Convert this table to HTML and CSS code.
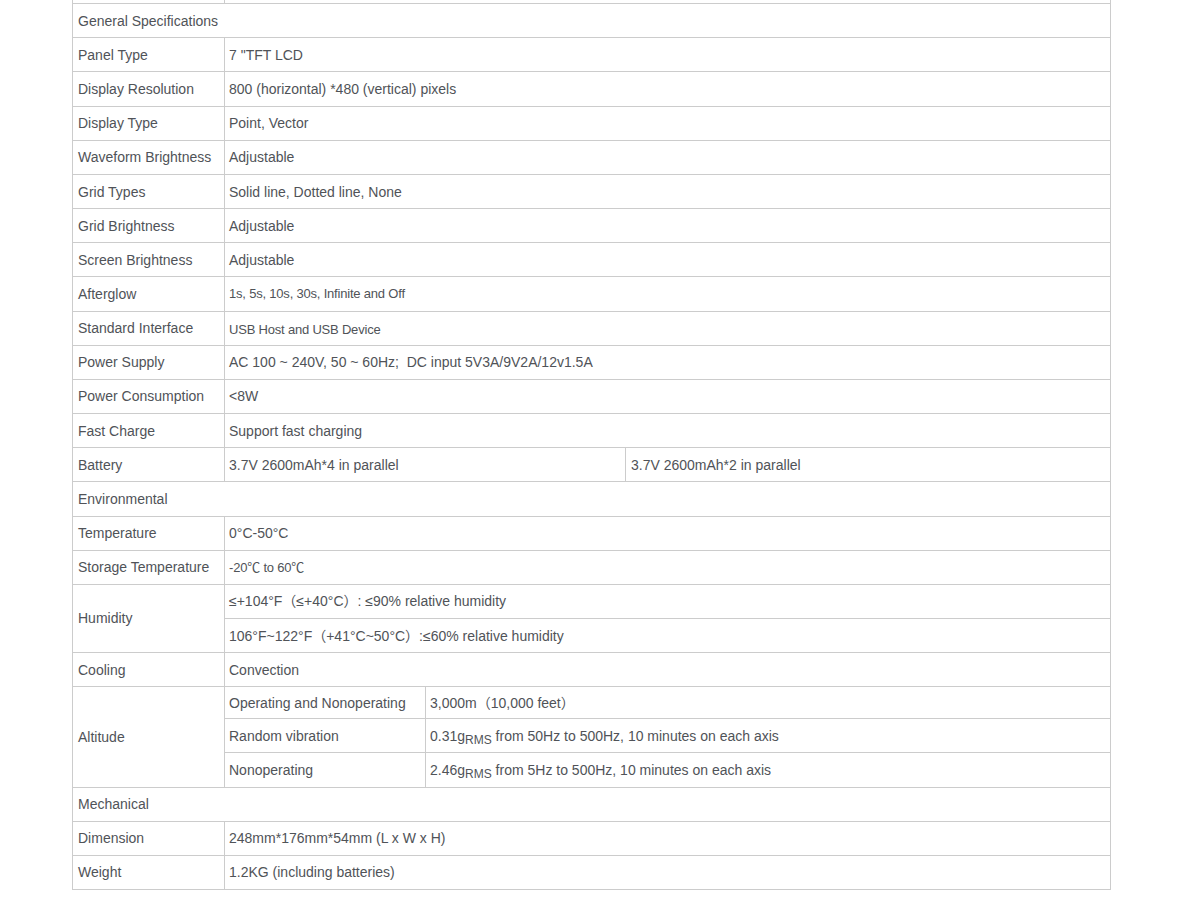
FILE: index.html
```html
<!DOCTYPE html>
<html>
<head>
<meta charset="utf-8">
<link rel="stylesheet" href="styles.css">
</head>
<body>
<table class="spec">
  <colgroup>
    <col class="c1"><col class="c2"><col class="c3"><col class="c4">
  </colgroup>
  <tr class="cut"><td></td><td colspan="3"></td></tr>
  <tr><td colspan="4">General Specifications</td></tr>
  <tr><td>Panel Type</td><td class="v" colspan="3">7 "TFT LCD</td></tr>
  <tr><td>Display Resolution</td><td class="v" colspan="3">800 (horizontal) *480 (vertical) pixels</td></tr>
  <tr><td>Display Type</td><td class="v" colspan="3">Point, Vector</td></tr>
  <tr><td>Waveform Brightness</td><td class="v" colspan="3">Adjustable</td></tr>
  <tr><td>Grid Types</td><td class="v" colspan="3">Solid line, Dotted line, None</td></tr>
  <tr><td>Grid Brightness</td><td class="v" colspan="3">Adjustable</td></tr>
  <tr><td>Screen Brightness</td><td class="v" colspan="3">Adjustable</td></tr>
  <tr><td>Afterglow</td><td class="v" colspan="3"><span class="sm">1s, 5s, 10s, 30s, Infinite and Off</span></td></tr>
  <tr><td>Standard Interface</td><td class="v" colspan="3"><span class="sm low">USB Host and USB Device</span></td></tr>
  <tr><td>Power Supply</td><td class="v" colspan="3">AC 100 ~ 240V, 50 ~ 60Hz;&nbsp; DC input 5V3A/9V2A/12v1.5A</td></tr>
  <tr><td>Power Consumption</td><td class="v" colspan="3">&lt;8W</td></tr>
  <tr><td>Fast Charge</td><td class="v" colspan="3">Support fast charging</td></tr>
  <tr><td>Battery</td><td class="v" colspan="2">3.7V 2600mAh*4 in parallel</td><td>3.7V 2600mAh*2 in parallel</td></tr>
  <tr><td colspan="4">Environmental</td></tr>
  <tr><td>Temperature</td><td class="v" colspan="3">0°C-50°C</td></tr>
  <tr><td>Storage Temperature</td><td class="v" colspan="3"><span class="sm">-20℃ to 60℃</span></td></tr>
  <tr><td rowspan="2">Humidity</td><td class="v" colspan="3">≤+104°F（≤+40°C）: ≤90% relative humidity</td></tr>
  <tr><td class="v" colspan="3">106°F~122°F（+41°C~50°C）:≤60% relative humidity</td></tr>
  <tr><td>Cooling</td><td class="v" colspan="3">Convection</td></tr>
  <tr class="short"><td rowspan="3">Altitude</td><td class="v">Operating and Nonoperating</td><td class="v" colspan="2">3,000m（10,000 feet）</td></tr>
  <tr><td class="v">Random vibration</td><td class="v" colspan="2">0.31g<sub>RMS</sub> from 50Hz to 500Hz, 10 minutes on each axis</td></tr>
  <tr><td class="v">Nonoperating</td><td class="v" colspan="2">2.46g<sub>RMS</sub> from 5Hz to 500Hz, 10 minutes on each axis</td></tr>
  <tr><td colspan="4">Mechanical</td></tr>
  <tr><td>Dimension</td><td class="v" colspan="3">248mm*176mm*54mm (L x W x H)</td></tr>
  <tr><td>Weight</td><td class="v" colspan="3">1.2KG (including batteries)</td></tr>
</table>
</body>
</html>
```
FILE: styles.css
```css
html, body {
  margin: 0;
  padding: 0;
  background: #fff;
}
.spec {
  margin: -31px 0 0 72px;
  width: 1038px;
  border-collapse: collapse;
  table-layout: fixed;
  font-family: "Liberation Sans", Arial, "Noto Sans CJK SC", sans-serif;
  font-size: 14px;
  color: #505358;
}
.c1 { width: 152px; }
.c2 { width: 201px; }
.c3 { width: 200px; }
.c4 { width: 485px; }
.spec tr { height: 34.16px; }
.spec tr.short { height: 32px; }
.spec td {
  border: 1px solid #ccc;
  padding: 0 5px;
  vertical-align: middle;
  line-height: 18px;
  white-space: nowrap;
}
.spec td.v {
  padding-left: 4px;
}
.sm {
  font-size: 13px;
  letter-spacing: -0.2px;
}
.low {
  position: relative;
  top: 1px;
}
sub {
  font-size: 12px;
  vertical-align: -3px;
  line-height: 0;
}
```
